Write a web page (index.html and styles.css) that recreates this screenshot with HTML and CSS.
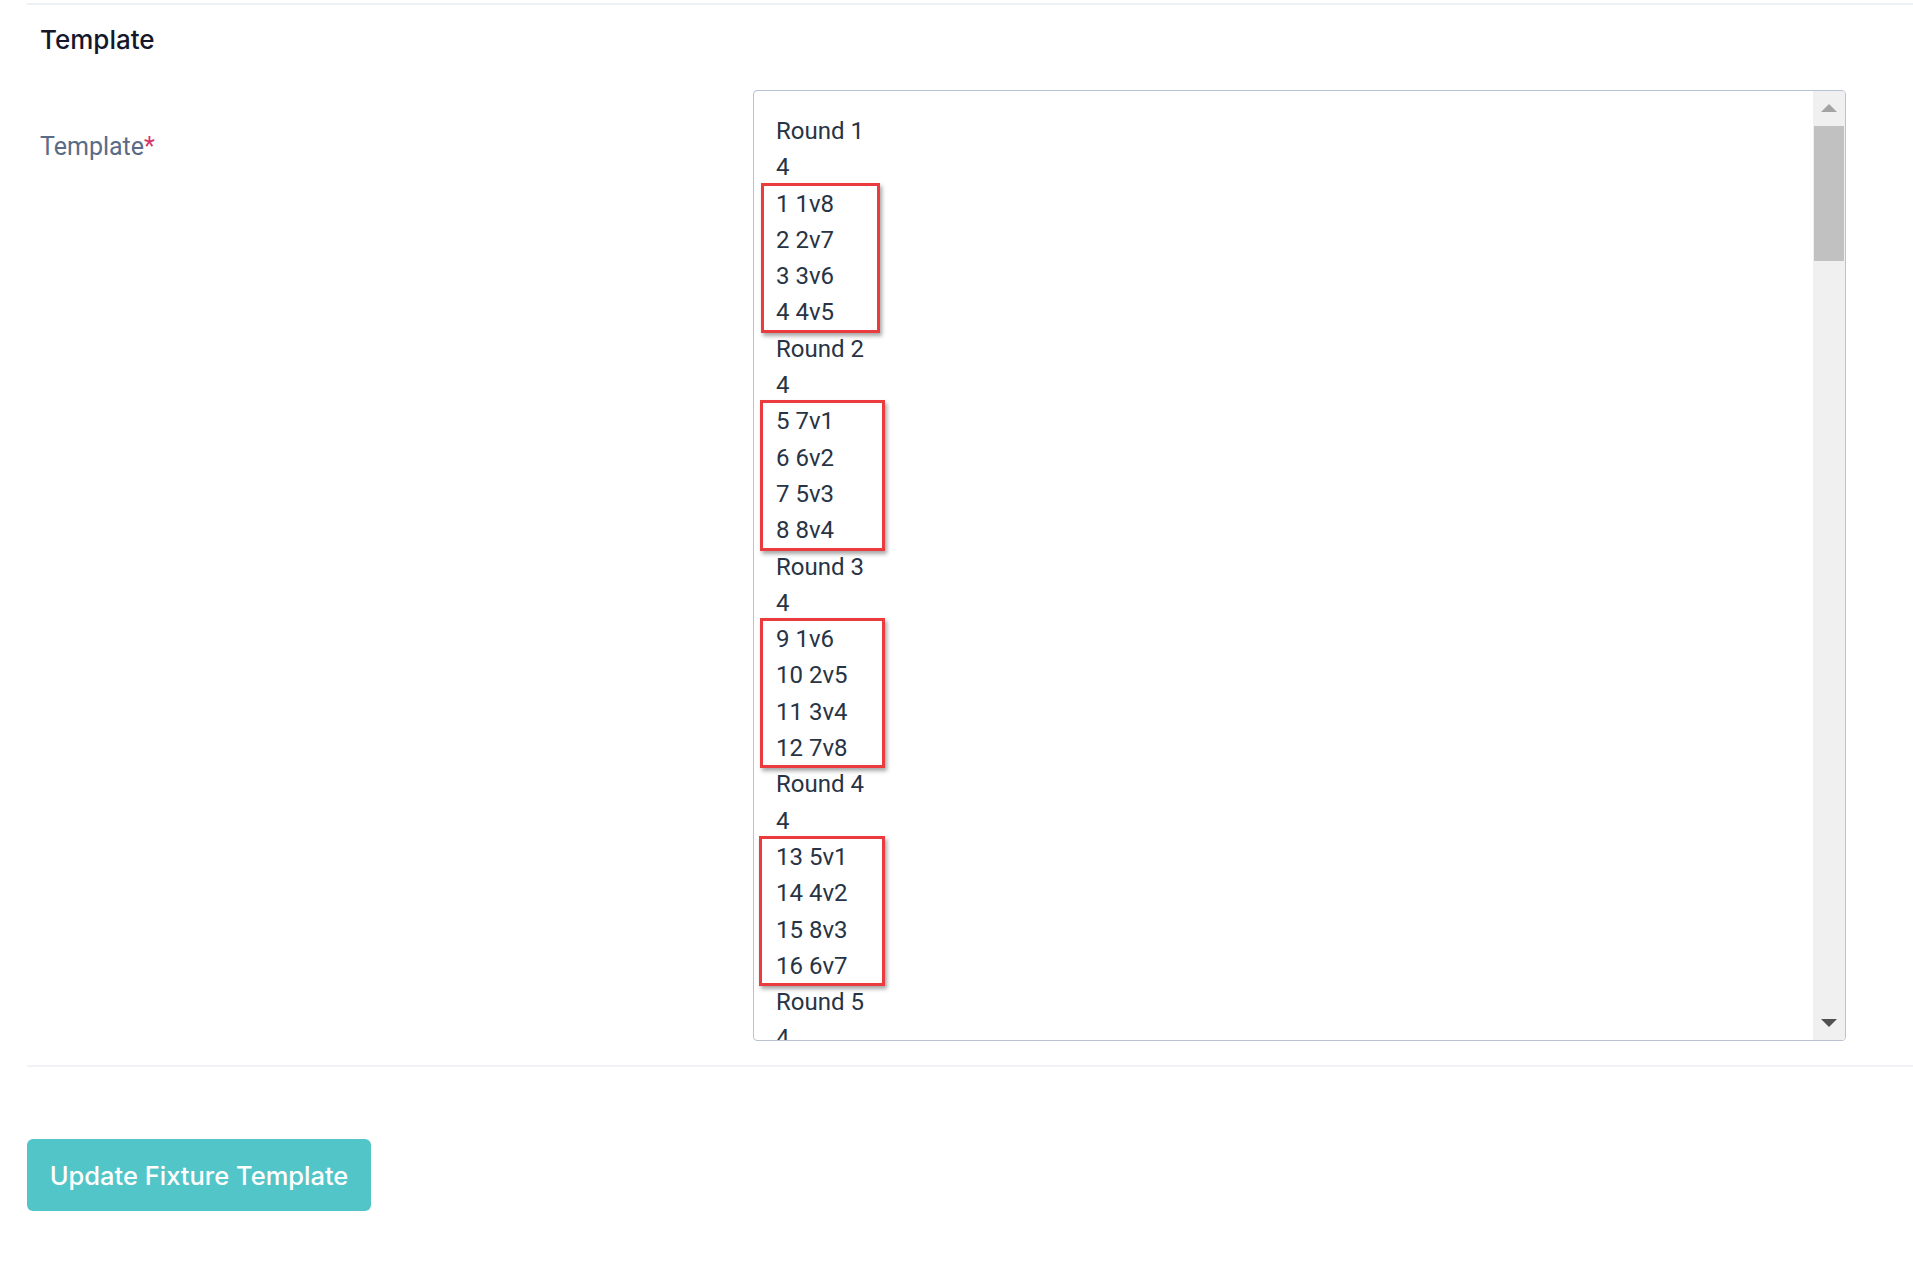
FILE: index.html
```html
<!DOCTYPE html>
<html lang="en">
<head>
  <meta charset="UTF-8" />
  <title>Fixture Template</title>
  <link rel="stylesheet" href="styles.css">
</head>
<body>

<div class="page">
  <div class="section">
    <h3 class="section-title">Template</h3>

    <div class="form-row">
      <label class="field-label">Template<span class="req">*</span></label>

      <div class="template-box">
        <div class="template-text">
          <div>Round 1</div>
          <div>4</div>
          <div class="mark mark-narrow">
            <div>1 1v8</div>
            <div>2 2v7</div>
            <div>3 3v6</div>
            <div>4 4v5</div>
          </div>
          <div>Round 2</div>
          <div>4</div>
          <div class="mark">
            <div>5 7v1</div>
            <div>6 6v2</div>
            <div>7 5v3</div>
            <div>8 8v4</div>
          </div>
          <div>Round 3</div>
          <div>4</div>
          <div class="mark">
            <div>9 1v6</div>
            <div>10 2v5</div>
            <div>11 3v4</div>
            <div>12 7v8</div>
          </div>
          <div>Round 4</div>
          <div>4</div>
          <div class="mark mark-wide">
            <div>13 5v1</div>
            <div>14 4v2</div>
            <div>15 8v3</div>
            <div>16 6v7</div>
          </div>
          <div>Round 5</div>
          <div>4</div>
          <div>17 1v4</div>
        </div>

        <div class="scrollbar">
          <div class="scroll-btn up"></div>
          <div class="scroll-thumb"></div>
          <div class="scroll-btn down"></div>
        </div>
      </div>
    </div>
  </div>

  <div class="actions">
    <button type="button" class="btn-update">Update Fixture Template</button>
  </div>
</div>

</body>
</html>
```

FILE: styles.css
```css
*, *::before, *::after {
  box-sizing: border-box;
}
html, body {
  margin: 0;
  padding: 0;
  background: #fff;
}
.page {
  padding-left: 27px;
  padding-top: 3px;
}
.section {
  border-top: 2px solid #eef1f4;
  border-bottom: 2px solid #f0f2f5;
  padding: 0 0 24px 13px;
}
.section-title {
  margin: 20px 0 0;
  font-family: Inter, sans-serif;
  font-weight: 500;
  font-size: 26px;
  line-height: 30px;
  color: #15172b;
}
.form-row {
  display: grid;
  grid-template-columns: 713px 1093px;
  margin-top: 35px;
}
.field-label {
  margin-top: 39px;
  font-family: Roboto, sans-serif;
  font-size: 25px;
  line-height: 36px;
  color: #5a6b87;
}
.req {
  color: #d6336c;
}
.template-box {
  position: relative;
  height: 951px;
  border: 1px solid #b7c2d2;
  border-radius: 4px;
  overflow: hidden;
}
.template-text {
  padding: 22px 0 0 22px;
  font-family: Roboto, sans-serif;
  font-size: 24px;
  line-height: 36.3px;
  color: #283344;
}
.mark {
  position: relative;
}
.mark::after {
  content: "";
  position: absolute;
  top: -3px;
  bottom: -2px;
  left: -16px;
  width: 125px;
  border: 3px solid #ea3b3f;
  box-shadow: 2px 3px 4px rgba(0, 0, 0, 0.35);
}
.mark-narrow::after {
  left: -15px;
  width: 119px;
}
.mark-wide::after {
  left: -17px;
  width: 126px;
}
.scrollbar {
  position: absolute;
  top: 0;
  right: 0;
  bottom: 0;
  width: 32px;
  background: #f0f0f0;
  display: flex;
  flex-direction: column;
}
.scroll-btn {
  height: 34px;
  display: flex;
  align-items: center;
  justify-content: center;
}
.scroll-btn::before {
  content: "";
  border-left: 8px solid transparent;
  border-right: 8px solid transparent;
}
.scroll-btn.up::before {
  border-bottom: 8px solid #a3a3a3;
}
.scroll-btn.down {
  margin-top: auto;
}
.scroll-btn.down::before {
  border-top: 8px solid #505050;
}
.scroll-thumb {
  margin: 1px 1px 0 1px;
  height: 135px;
  background: #c1c1c1;
}
.actions {
  padding-top: 72px;
}
.btn-update {
  width: 344px;
  height: 72px;
  border: none;
  border-radius: 6px;
  background: #52c5c8;
  color: #fff;
  font-family: Inter, sans-serif;
  font-weight: 500;
  font-size: 25.5px;
  cursor: pointer;
}
```
